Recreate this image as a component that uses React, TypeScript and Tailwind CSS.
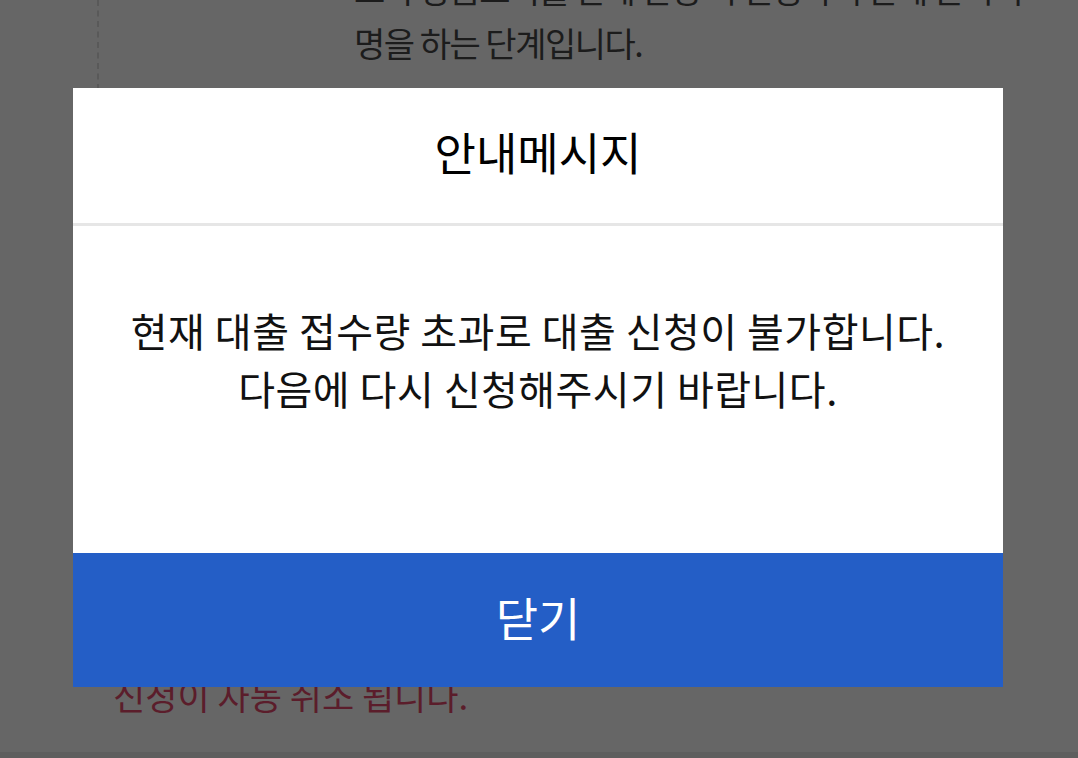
import React from 'react';

const font = { fontFamily: '"Noto Sans CJK KR", "Noto Sans", sans-serif' };

export default function App() {
    return (
        <div className="relative w-[1078px] h-[758px] overflow-hidden bg-[#666666]" style={font}>
            {/* dimmed page behind the dialog */}
            <div className="flex flex-col h-full">
                <div className="flex flex-1">
                    <div className="w-[97px] shrink-0" />
                    <div className="w-[2px] h-[90px] border-l-2 border-dashed border-[#595959]" />
                    <div className="pl-[255px] -mt-[38px] text-[34px] leading-[54px] text-[#1c1c1c] tracking-[-1.5px]">
                        <p>보다 상품조회를 단계 선정 시 신청하여 관계 한시적</p>
                        <p>명을 하는 단계입니다.</p>
                    </div>
                </div>
                <div className="pl-[113px] pb-[37px] text-[35px] leading-[40px] text-[#5b1d2b]">
                    신청이 자동 취소 됩니다.
                </div>
                <div className="h-[6px] bg-[#5e5e5e]" />
            </div>

            {/* dialog */}
            <div className="absolute left-[73px] top-[88px] w-[930px] flex flex-col bg-white">
                <div className="h-[135px] pb-[8px] flex items-center justify-center text-[45px] text-black">
                    안내메시지
                </div>
                <div className="h-[3px] bg-[#e6e6e6]" />
                <div className="h-[327px] flex flex-col items-center justify-center text-[40px] leading-[58px] text-[#111111] tracking-[0.5px] pb-[61px]">
                    <p>현재 대출 접수량 초과로 대출 신청이 불가합니다.</p>
                    <p>다음에 다시 신청해주시기 바랍니다.</p>
                </div>
                <button className="h-[134px] pb-[8px] bg-[#245ec6] text-white text-[46px] flex items-center justify-center">
                    닫기
                </button>
            </div>
        </div>
    );
}
